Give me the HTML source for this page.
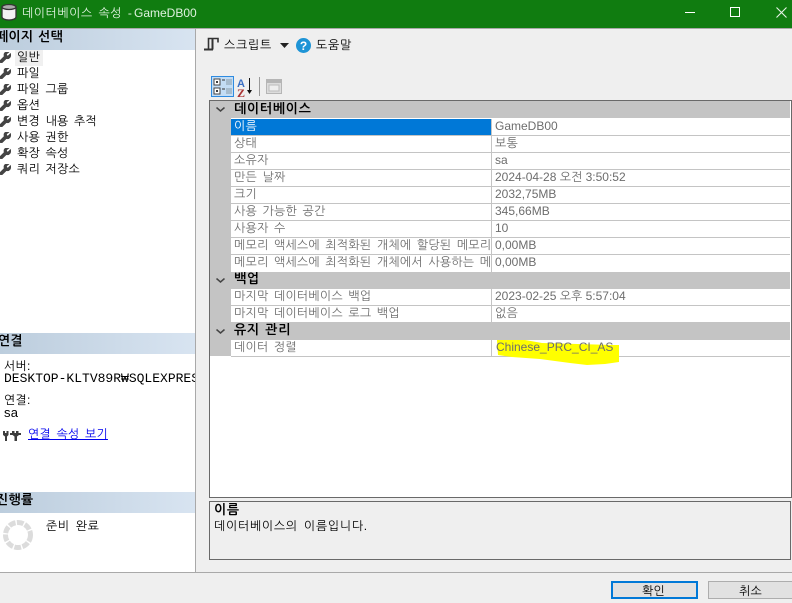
<!DOCTYPE html>
<html lang="ko"><head><meta charset="utf-8"><style>
html,body{margin:0;padding:0}
body{width:792px;height:603px;overflow:hidden;position:relative;background:#efefef;font-family:"Liberation Sans","NanumGothic","Noto Sans CJK KR",sans-serif;font-size:12px;color:#000}
.a{position:absolute}
.t{position:absolute;white-space:pre;line-height:16px;height:16px;letter-spacing:.2px;word-spacing:2px}
.b{font-weight:700;font-size:13px;letter-spacing:.7px;word-spacing:1px}
.hd{position:absolute;left:0;width:195px;height:21px;background:linear-gradient(90deg,#bccddd,#d8e4f1);overflow:hidden}
.hd .b{letter-spacing:.2px}
.ln{position:absolute;left:231px;width:559px;height:1px;background:#c4c4c4}
.sec{position:absolute;left:210px;width:580px;height:17px;background:#c4c4c4}
.ck{position:absolute;left:216px;width:9px;height:5px}
.n{position:absolute;left:231px;width:259px;overflow:hidden;height:16px;white-space:pre;line-height:16px;letter-spacing:.2px;word-spacing:2px;color:#6d6d6d;text-indent:3px}
.v{position:absolute;left:495px;white-space:pre;line-height:16px;color:#6d6d6d}
.w{position:absolute;left:0;width:11px;height:11px}
</style></head><body>
<div class="a" style="left:0;top:0;width:792px;height:28px;background:#107c10"></div>
<div class="a" style="left:0;top:28px;width:792px;height:1px;background:#a9a9a9"></div>
<svg class="a" style="left:0;top:3px" width="18" height="18" viewBox="0 0 18 18"><path d="M2 4v10c0 1.600 3 3 7 3s7-1.400 7-3V4z" fill="#f2f2f2" stroke="#333" stroke-width="1.300"/><ellipse cx="9" cy="4" rx="7" ry="2.500" fill="#aaa" stroke="#333" stroke-width="1.300"/></svg>
<div class="t" style="left:22px;top:5px;color:#dff2df;letter-spacing:.5px">데이터베이스 속성 - </div>
<div class="t" style="left:134px;top:5px;color:#dff2df;letter-spacing:0">GameDB00</div>
<div class="a" style="left:685px;top:12px;width:10px;height:1px;background:#fff"></div>
<div class="a" style="left:730px;top:7px;width:8px;height:8px;border:1px solid #fff"></div>
<svg class="a" style="left:776px;top:7px" width="11" height="11"><path d="M.5.500l10 10M10.500.500l-10 10" stroke="#e8f3e8" stroke-width="1.100"/></svg>

<div class="a" style="left:0;top:29px;width:195px;height:543px;background:#fff"></div>
<div class="a" style="left:195px;top:29px;width:1px;height:543px;background:#a9a9a9"></div>
<div class="a" style="left:0;top:572px;width:792px;height:1px;background:#a9a9a9"></div>

<div class="hd" style="top:29px"><div class="t b" style="left:-4px;top:0">페이지 선택</div></div>
<div class="a" style="left:15px;top:50px;width:28px;height:16px;background:#f0f0f0"></div>
<svg width="0" height="0" style="position:absolute"><defs><symbol id="wr" viewBox="0 0 11 11"><path d="M10.500 1.500L8 4 6.800 3.500 6.500 2 8.800.300C7-.400 5-.100 4.200 1.500 3.800 2.500 3.900 3.400 4.200 4.300L0 8.500V10.500L1.800 11 6.300 6.600C7.500 7 9 6.800 10 5.600 10.800 4.500 10.900 2.800 10.500 1.500z" fill="#444" stroke="#444" stroke-width=".6"/></symbol></defs></svg>
<svg class="w" style="top:52px"><use href="#wr"/></svg><div class="t" style="left:17px;top:49px">일반</div>
<svg class="w" style="top:68px"><use href="#wr"/></svg><div class="t" style="left:17px;top:65px">파일</div>
<svg class="w" style="top:84px"><use href="#wr"/></svg><div class="t" style="left:17px;top:81px">파일 그룹</div>
<svg class="w" style="top:100px"><use href="#wr"/></svg><div class="t" style="left:17px;top:97px">옵션</div>
<svg class="w" style="top:116px"><use href="#wr"/></svg><div class="t" style="left:17px;top:113px">변경 내용 추적</div>
<svg class="w" style="top:132px"><use href="#wr"/></svg><div class="t" style="left:17px;top:129px">사용 권한</div>
<svg class="w" style="top:148px"><use href="#wr"/></svg><div class="t" style="left:17px;top:145px">확장 속성</div>
<svg class="w" style="top:164px"><use href="#wr"/></svg><div class="t" style="left:17px;top:161px">쿼리 저장소</div>

<div class="hd" style="top:333px"><div class="t b" style="left:-2px;top:0">연결</div></div>
<div class="t" style="left:4px;top:358px">서버:</div>
<div class="a" style="left:4px;top:371px;width:191px;overflow:hidden;height:16px;line-height:16px;white-space:pre;font-family:'Liberation Mono',monospace;font-size:13px">DESKTOP-KLTV89R₩SQLEXPRESS</div>
<div class="t" style="left:4px;top:392px">연결:</div>
<div class="t" style="left:4px;top:405px;font-size:13px">sa</div>
<svg class="a" style="left:3px;top:430px" width="18" height="12" viewBox="0 0 18 12"><path d="M0 1h2v2h1.500V1h2v4L4 6.500V11H2V6.500L0 5zM9 1h2.500v2h1.500V1h2.500v2H18v2h-2l-2 1.500V11h-2.500V6.500L9.500 5H7V3h2z" fill="#3d3d3d"/></svg>
<div class="t" style="left:28px;top:426px;color:#0000ee;text-decoration:underline">연결 속성 보기</div>

<div class="hd" style="top:492px"><div class="t b" style="left:-4px;top:0">진행률</div></div>
<svg class="a" style="left:3px;top:520px" width="30" height="30"><circle cx="15" cy="15" r="12.500" fill="none" stroke="#dcdcdc" stroke-width="5" stroke-dasharray="6.800 1.400"/></svg>
<div class="t" style="left:46px;top:518px;letter-spacing:.6px">준비 완료</div>

<svg class="a" style="left:204px;top:37px" width="15" height="14" viewBox="0 0 15 14"><path d="M4.500 12V1.500H14V5.500" fill="none" stroke="#333" stroke-width="1.600"/><path d="M8.500 1.500V12.500M0 12.500H9" fill="none" stroke="#333" stroke-width="2"/></svg>
<div class="t" style="left:224px;top:37px;letter-spacing:.7px">스크립트</div>
<svg class="a" style="left:280px;top:43px" width="9" height="5"><path d="M0 0h9L4.500 5z" fill="#222"/></svg>
<svg class="a" style="left:296px;top:38px" width="15" height="15"><circle cx="7.500" cy="7.500" r="7.500" fill="#1e94d6"/><text x="7.500" y="12" text-anchor="middle" font-family="Liberation Sans" font-weight="700" font-size="12" fill="#fff">?</text></svg>
<div class="t" style="left:316px;top:37px;letter-spacing:.7px">도움말</div>

<div class="a" style="left:211px;top:76px;width:21px;height:19px;background:#c3ddf5;border:1px solid #2f8be0"></div>
<svg class="a" style="left:213px;top:78px" width="20" height="17" viewBox="0 0 20 17"><rect x="1" y="1" width="6" height="6" fill="#fff" stroke="#444"/><rect x="1" y="10" width="6" height="6" fill="#fff" stroke="#444"/><path d="M3 4h2M3 13h2M4 12v2M4 3v2" stroke="#000"/><path d="M9 2h3M9 11h3" stroke="#333"/><path d="M13 2h6M13 4h6M13 6h6M13 11h6M13 13h6M13 15h6" stroke="#8a9aa8"/></svg>
<svg class="a" style="left:237px;top:78px" width="17" height="19"><text x="0" y="9" font-family="Liberation Sans" font-weight="700" font-size="11" fill="#3a6fc4">A</text><text x="0" y="19" font-family="Liberation Serif" font-weight="700" font-size="12" fill="#a33">Z</text><path d="M12.500 0v14" stroke="#111"/><path d="M10 12h5l-2.500 4z" fill="#111"/></svg>
<div class="a" style="left:259px;top:77px;width:1px;height:19px;background:#9a9a9a"></div>
<svg class="a" style="left:266px;top:79px" width="16" height="15"><rect x=".5" y=".5" width="15" height="14" fill="#dcdcdc" stroke="#b5b5b5"/><rect x="1" y="1" width="14" height="3" fill="#b5b5b5"/><rect x="3" y="6" width="10" height="6" fill="#eee" stroke="#bbb"/></svg>

<div class="a" style="left:209px;top:100px;width:581px;height:396px;background:#fff;border:1px solid #696969"></div>
<div class="a" style="left:210px;top:101px;width:21px;height:255px;background:#c4c4c4"></div>
<div class="a" style="left:491px;top:119px;width:1px;height:237px;background:#c4c4c4"></div>
<div class="ln" style="top:135px"></div><div class="ln" style="top:152px"></div><div class="ln" style="top:169px"></div><div class="ln" style="top:186px"></div><div class="ln" style="top:203px"></div><div class="ln" style="top:220px"></div><div class="ln" style="top:237px"></div><div class="ln" style="top:254px"></div><div class="ln" style="top:305px"></div><div class="ln" style="top:322px"></div><div class="ln" style="top:356px"></div>
<div class="sec" style="top:101px"></div><div class="sec" style="top:272px"></div><div class="sec" style="top:323px"></div>
<svg class="ck" style="top:107px" viewBox="0 0 9 5"><path d="M.5.500l4 3.500 4-3.500" fill="none" stroke="#444" stroke-width="1.500"/></svg>
<svg class="ck" style="top:278px" viewBox="0 0 9 5"><path d="M.5.500l4 3.500 4-3.500" fill="none" stroke="#444" stroke-width="1.500"/></svg>
<svg class="ck" style="top:329px" viewBox="0 0 9 5"><path d="M.5.500l4 3.500 4-3.500" fill="none" stroke="#444" stroke-width="1.500"/></svg>
<div class="t b" style="left:234px;top:101px">데이터베이스</div>
<div class="t b" style="left:234px;top:271px">백업</div>
<div class="t b" style="left:234px;top:322px">유지 관리</div>

<div class="a" style="left:231px;top:119px;width:260px;height:16px;background:#0078d7"></div>
<div class="n" style="top:118px;color:#fff;height:17px">이름</div><div class="v" style="top:118px">GameDB00</div>
<div class="n" style="top:135px">상태</div><div class="v" style="top:135px;letter-spacing:.2px">보통</div>
<div class="n" style="top:152px">소유자</div><div class="v" style="top:152px">sa</div>
<div class="n" style="top:169px">만든 날짜</div><div class="v" style="top:169px">2024-04-28 오전 3:50:52</div>
<div class="n" style="top:186px">크기</div><div class="v" style="top:186px">2032,75MB</div>
<div class="n" style="top:203px">사용 가능한 공간</div><div class="v" style="top:203px">345,66MB</div>
<div class="n" style="top:220px">사용자 수</div><div class="v" style="top:220px">10</div>
<div class="n" style="top:237px">메모리 액세스에 최적화된 개체에 할당된 메모리</div><div class="v" style="top:237px">0,00MB</div>
<div class="n" style="top:254px">메모리 액세스에 최적화된 개체에서 사용하는 메모리</div><div class="v" style="top:254px">0,00MB</div>
<div class="n" style="top:288px">마지막 데이터베이스 백업</div><div class="v" style="top:288px">2023-02-25 오후 5:57:04</div>
<div class="n" style="top:305px">마지막 데이터베이스 로그 백업</div><div class="v" style="top:305px;letter-spacing:.2px">없음</div>
<div class="n" style="top:339px">데이터 정렬</div>
<svg class="a" style="left:490px;top:335px" width="135" height="35"><polygon transform="translate(-490 -335)" points="497,340 525,340 542,343 613,345 619,345 619,362 605,364 587,365 570,363 555,361 540,359 512,357 498,355" fill="#ffff00"/></svg>
<div class="v" style="top:339px;left:496px">Chinese_PRC_CI_AS</div>

<div class="a" style="left:209px;top:501px;width:580px;height:57px;border:1px solid #696969"></div>
<div class="t b" style="left:214px;top:502px">이름</div>
<div class="t" style="left:214px;top:518px;letter-spacing:.7px">데이터베이스의 이름입니다.</div>

<div class="a" style="left:611px;top:581px;width:83px;height:14px;background:#e1e1e1;border:2px solid #0078d7"></div>
<div class="t" style="left:642px;top:583px">확인</div>
<div class="a" style="left:708px;top:581px;width:90px;height:16px;background:#e1e1e1;border:1px solid #adadad"></div>
<div class="t" style="left:739px;top:583px">취소</div>
</body></html>
